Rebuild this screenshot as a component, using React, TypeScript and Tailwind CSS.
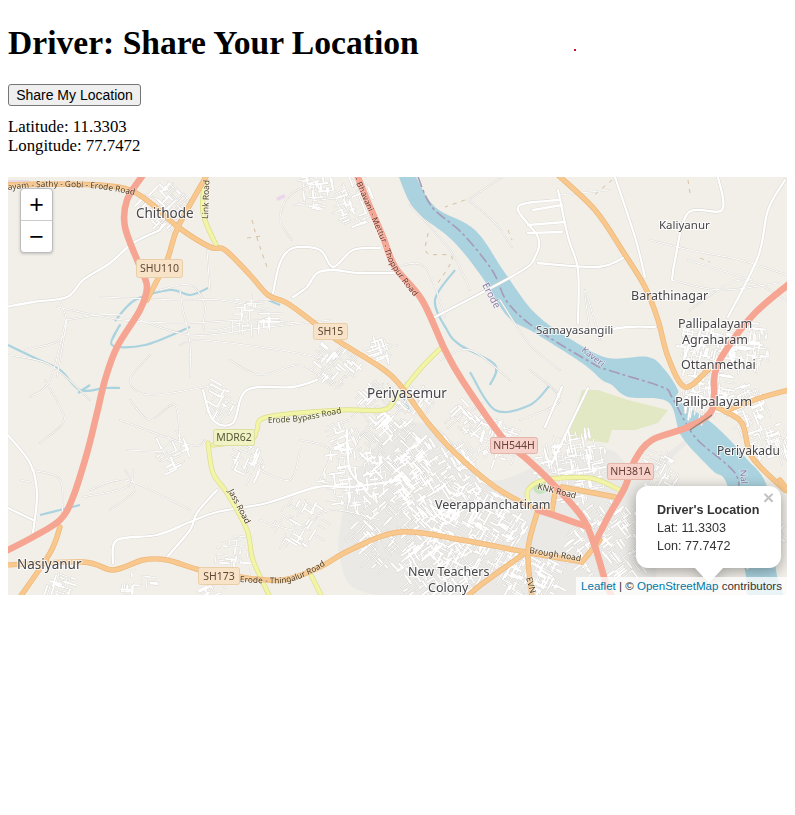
import { useMemo } from "react";

type Pt = [number, number];

const BG = "#f2efe9";

const motorways: Pt[][] = [
  [[143, 175], [127, 200], [125, 227], [140, 267], [147, 287], [140, 310], [117, 347], [105, 380], [97, 413], [87, 453], [73, 497], [60, 520], [33, 537], [6, 551]],
  [[357, 175], [367, 200], [383, 237], [395, 267], [422, 300], [445, 350], [462, 380], [502, 437], [528, 460], [552, 483], [582, 517], [595, 547], [605, 580], [612, 597]],
  [[789, 284], [755, 313], [728, 347], [715, 373], [712, 410], [688, 427], [652, 440], [635, 460], [625, 487], [608, 517], [595, 543]],
  [[538, 510], [562, 518], [588, 527]],
];

const primaries: Pt[][] = [
  [[6, 185], [50, 184], [100, 185], [130, 190], [153, 205], [178, 227], [210, 247], [225, 250], [250, 275], [268, 295], [287, 303], [313, 322], [340, 342], [380, 367], [400, 385], [428, 423], [455, 453], [495, 487], [528, 505], [552, 512]],
  [[207, 175], [178, 227], [167, 260], [147, 300]],
  [[6, 565], [83, 562], [113, 570], [143, 560], [167, 560], [200, 570], [240, 577], [283, 580], [320, 567], [350, 550], [400, 532], [462, 540], [525, 552], [582, 562]],
  [[60, 527], [50, 553], [20, 597]],
  [[525, 553], [478, 587], [468, 597]],
  [[538, 510], [528, 550], [532, 597]],
  [[562, 487], [615, 497]],
  [[555, 493], [552, 510]],
  [[582, 562], [600, 540]],
  [[558, 175], [595, 210], [622, 250], [645, 287], [658, 320], [668, 357], [685, 387], [708, 370]],
  [[712, 405], [722, 410], [742, 423], [752, 457], [785, 490]],
  [[728, 410], [760, 398], [789, 390]],
  [[780, 480], [789, 492]],
];

const secondaries: Pt[][] = [
  [[205, 177], [203, 213], [217, 247]],
  [[208, 443], [213, 473], [227, 493], [247, 530], [253, 560], [270, 597]],
  [[213, 445], [250, 440], [257, 430], [267, 417], [340, 410], [383, 410], [397, 397], [422, 367], [442, 347]],
  [[310, 573], [322, 597]],
  [[529, 505], [528, 490], [545, 480], [590, 478], [620, 490]],
];

const whiteRoads: Pt[][] = [
  [[6, 307], [33, 302], [67, 297], [83, 280], [110, 263], [133, 243], [160, 230]],
  [[273, 293], [280, 263], [293, 248], [320, 250], [333, 267], [353, 250], [380, 248]],
  [[293, 297], [307, 287], [317, 273], [333, 270], [360, 273], [397, 273]],
  [[6, 433], [30, 463], [37, 493], [33, 533]],
  [[113, 563], [117, 540], [157, 535], [190, 522], [217, 512], [267, 503], [317, 487], [350, 487], [400, 480]],
  [[167, 557], [190, 530], [197, 513], [217, 490]],
  [[203, 390], [213, 420], [233, 423], [247, 390], [293, 387], [317, 380]],
  [[6, 507], [33, 520]],
  [[435, 317], [518, 273], [535, 257], [538, 237], [518, 207], [558, 200]],
  [[558, 190], [568, 237], [578, 270], [578, 323]],
  [[528, 233], [562, 232]],
  [[615, 177], [635, 237], [645, 277]],
  [[718, 177], [722, 210], [688, 213], [675, 260], [672, 280]],
  [[785, 180], [768, 210], [758, 257], [728, 317]],
  [[538, 263], [598, 267], [625, 257]],
  [[588, 333], [628, 327], [655, 327]],
  [[588, 388], [552, 463]],
  [[562, 387], [545, 427]],
  [[533, 210], [562, 205]],
  [[528, 225], [565, 222]],
  [[347, 430], [350, 470], [367, 490]],
];

const minorRoads: Pt[][] = [
  [[25, 350], [60, 340], [66, 320], [60, 300]],
  [[100, 297], [180, 300], [220, 300], [270, 310]],
  [[66, 320], [120, 315], [190, 335], [260, 328], [330, 320]],
  [[66, 320], [50, 380], [30, 397]],
  [[8, 355], [50, 365], [90, 400]],
  [[120, 420], [190, 445], [205, 440]],
  [[30, 470], [60, 480], [62, 520]],
  [[125, 470], [135, 490], [110, 510]],
  [[90, 490], [125, 480], [170, 500], [190, 510]],
  [[410, 205], [450, 250], [470, 290]],
  [[530, 370], [560, 400], [520, 420]],
  [[590, 330], [585, 290], [600, 340]],
  [[650, 240], [690, 250], [740, 260], [787, 275]],
  [[610, 190], [560, 195]],
  [[690, 310], [740, 280], [787, 300]],
  [[320, 180], [290, 195], [280, 220], [292, 240]],
  [[160, 290], [190, 285], [205, 305], [205, 330], [240, 325]],
  [[180, 345], [200, 340], [280, 350], [330, 360]],
  [[260, 520], [300, 530], [330, 510], [380, 520]],
  [[130, 400], [150, 420], [175, 405], [180, 450]],
  [[45, 380], [60, 407], [63, 423], [40, 443]],
  [[20, 480], [37, 483]],
  [[127, 450], [167, 452]],
  [[83, 497], [127, 487], [133, 470]],
  [[57, 307], [123, 320], [187, 323], [247, 320], [300, 323]],
  [[67, 320], [57, 377]],
  [[210, 290], [207, 250]],
  [[180, 290], [183, 310], [190, 343], [190, 377]],
  [[468, 200], [495, 223], [512, 247]],
  [[468, 200], [502, 177]],
  [[672, 280], [720, 290], [778, 283]],
  [[688, 260], [752, 280]],
  [[395, 267], [425, 267], [445, 317]],
  [[500, 300], [530, 345], [560, 370]],
  [[440, 360], [470, 350], [510, 380]],
  [[300, 440], [330, 450], [320, 480]],
  [[260, 470], [290, 480], [300, 450]],
  [[150, 355], [130, 380], [150, 395], [215, 385]],
  [[230, 360], [260, 375], [300, 365], [330, 385]],
];

// farm tracks, drawn dashed
const tracks: Pt[][] = [
  [[252, 220], [257, 238], [267, 267]],
  [[247, 238], [262, 236]],
  [[428, 233], [427, 253], [452, 257], [438, 283]],
  [[465, 200], [445, 207]],
  [[612, 180], [592, 197]],
  [[688, 180], [690, 193]],
  [[508, 230], [512, 240]],
  [[700, 258], [710, 262]],
];

const riverLines: Pt[][] = [
  [[115, 321], [135, 300], [170, 290], [190, 295], [208, 288]],
  [[112, 340], [120, 325], [112, 345], [145, 345], [190, 327]],
  [[8, 345], [35, 358], [60, 370], [80, 390], [105, 388], [120, 388]],
  [[78, 393], [90, 385]],
  [[40, 515], [60, 510], [80, 505]],
  [[268, 300], [280, 305]],
  [[400, 390], [410, 412]],
  [[455, 270], [435, 300], [447, 330], [460, 345], [495, 365], [490, 385]],
  [[470, 372], [495, 410], [530, 405], [550, 385]],
];

// main river, upper bank then back along the lower bank
const river: Pt[] = [
  [415, 175], [435, 207], [475, 230], [505, 273], [535, 313], [572, 340], [608, 358], [648, 357], [665, 370], [678, 390], [678, 400], [712, 423], [745, 457], [768, 490], [776, 570], [782, 597],
  [750, 597], [745, 570], [728, 487], [712, 470], [682, 437], [668, 402], [628, 397], [612, 385], [602, 380], [582, 363], [535, 333], [508, 317], [482, 277], [452, 240], [415, 210], [398, 175],
];

const boundary: Pt[] = [[418, 177], [432, 207], [462, 233], [492, 270], [508, 303], [538, 330], [592, 363], [608, 370], [662, 387], [672, 397], [695, 437], [735, 473], [738, 500]];

const park: Pt[] = [[582, 390], [598, 390], [628, 400], [668, 410], [658, 423], [635, 430], [612, 430], [608, 443], [582, 440], [568, 437]];

const builtUp: Pt[] = [[395, 420], [440, 430], [490, 480], [560, 455], [610, 450], [640, 470], [700, 430], [640, 500], [640, 597], [390, 597], [340, 560], [350, 480]];

// x, y, radius, number of streets
const clusters: [number, number, number, number][] = [
  [165, 205, 24, 70], [318, 192, 18, 50], [358, 205, 20, 55], [250, 313, 20, 45], [340, 365, 22, 60], [385, 350, 14, 28], [378, 402, 22, 60], [418, 400, 18, 36],
  [355, 475, 32, 100], [395, 450, 36, 150], [440, 480, 44, 270], [395, 530, 42, 180], [480, 530, 48, 340], [440, 570, 40, 190], [530, 575, 30, 150], [575, 470, 36, 180], [610, 540, 40, 200],
  [500, 440, 22, 70], [470, 415, 18, 45], [700, 345, 24, 110], [745, 345, 26, 110], [705, 390, 24, 110], [745, 405, 22, 80], [770, 440, 20, 60], [660, 470, 20, 50], [250, 460, 16, 32],
  [175, 455, 16, 30], [225, 400, 16, 32], [345, 432, 14, 30], [300, 520, 24, 45], [235, 555, 20, 30], [60, 585, 14, 24], [135, 585, 16, 22], [215, 585, 12, 16], [755, 530, 30, 80],
];

const shields = [
  { x: 136, y: 259, w: 47, h: 19, label: "SHU110", fill: "#f8e3c9", line: "#e9cfa8", text: "#5d4a34" },
  { x: 313, y: 323, w: 35, h: 17, label: "SH15", fill: "#f8e3c9", line: "#e9cfa8", text: "#5d4a34" },
  { x: 213, y: 429, w: 42, h: 17, label: "MDR62", fill: "#f1f3c4", line: "#dcdf9f", text: "#55573a" },
  { x: 198, y: 567, w: 42, h: 18, label: "SH173", fill: "#f8e3c9", line: "#e9cfa8", text: "#5d4a34" },
  { x: 490, y: 437, w: 48, h: 17, label: "NH544H", fill: "#f6d2ca", line: "#e3b5ab", text: "#6a4039" },
  { x: 607, y: 463, w: 47, h: 17, label: "NH381A", fill: "#f6d2ca", line: "#e3b5ab", text: "#6a4039" },
];

const places: { x: number; y: number; label: string; size?: number }[] = [
  { x: 136, y: 218, label: "Chithode", size: 13.5 },
  { x: 659, y: 229, label: "Kaliyanur", size: 11.5 },
  { x: 631, y: 300, label: "Barathinagar", size: 12.5 },
  { x: 678, y: 328, label: "Pallipalayam", size: 12.5 },
  { x: 682, y: 344, label: "Agraharam", size: 12.5 },
  { x: 681, y: 369, label: "Ottanmethai", size: 12.5 },
  { x: 536, y: 334, label: "Samayasangili", size: 11.5 },
  { x: 675, y: 406, label: "Pallipalayam", size: 13 },
  { x: 367, y: 398, label: "Periyasemur", size: 13.5 },
  { x: 717, y: 455, label: "Periyakadu", size: 12 },
  { x: 435, y: 509, label: "Veerappanchatiram", size: 12.5 },
  { x: 408, y: 576, label: "New Teachers", size: 12.5 },
  { x: 428, y: 592, label: "Colony", size: 12.5 },
  { x: 17, y: 569, label: "Nasiyanur", size: 13.5 },
];

const roadLabels: { x: number; y: number; r: number; label: string; fill?: string; size?: number }[] = [
  { x: 208, y: 219, r: -88, label: "Link Road" },
  { x: 228, y: 491, r: 62, label: "Jass Road" },
  { x: 537, y: 489, r: 14, label: "KNK Road" },
  { x: 529, y: 553, r: 9, label: "Brough Road" },
  { x: 526, y: 578, r: 74, label: "EVN" },
  { x: 482, y: 285, r: 62, label: "Erode", fill: "#8d7ba6", size: 10 },
  { x: 581, y: 351, r: 38, label: "Kaveri", fill: "#8d7ba6", size: 9 },
  { x: 740, y: 470, r: 85, label: "Nal", fill: "#8d7ba6", size: 9 },
];

// long names that bend with their road
const curvedLabels: { id: string; points: Pt[]; label: string; fill: string }[] = [
  { id: "sathy", points: [[8, 190], [40, 187], [70, 187], [100, 189], [135, 195]], label: "ayam - Sathy - Gobi - Erode Road", fill: "#4d3d22" },
  { id: "bhavani", points: [[354, 179], [364, 201], [380, 238], [392, 267], [422, 307]], label: "- Bhavani - Mettur - Thoppur Road", fill: "#6a3427" },
  { id: "bypass", points: [[268, 423], [300, 421], [342, 413]], label: "Erode Bypass Road", fill: "#4d4d22" },
  { id: "thingalur", points: [[240, 582], [283, 583], [310, 574], [330, 562]], label: "Erode - Thingalur Road", fill: "#4d3d22" },
];

function smooth(points: Pt[]) {
  let d = `M${points[0][0]} ${points[0][1]}`;
  for (let i = 0; i < points.length - 1; i++) {
    const p0 = points[i - 1] ?? points[i];
    const p1 = points[i];
    const p2 = points[i + 1];
    const p3 = points[i + 2] ?? p2;
    const c1x = p1[0] + (p2[0] - p0[0]) / 6;
    const c1y = p1[1] + (p2[1] - p0[1]) / 6;
    const c2x = p2[0] - (p3[0] - p1[0]) / 6;
    const c2y = p2[1] - (p3[1] - p1[1]) / 6;
    d += `C${c1x.toFixed(1)} ${c1y.toFixed(1)} ${c2x.toFixed(1)} ${c2y.toFixed(1)} ${p2[0]} ${p2[1]}`;
  }
  return d;
}

function poly(points: Pt[]) {
  return `M${points.map((p) => p.join(" ")).join("L")}Z`;
}

// little street grids for the built-up bits, seeded so every render is the same
function streets() {
  let seed = 42;
  const rnd = () => {
    seed = (seed * 1664525 + 1013904223) % 4294967296;
    return seed / 4294967296;
  };
  let thick = "";
  let thin = "";
  clusters.forEach(([cx, cy, r, n]) => {
    const base = rnd() * Math.PI;
    for (let i = 0; i < n; i++) {
      const a = rnd() * Math.PI * 2;
      const dist = Math.sqrt(rnd()) * r;
      const x = cx + Math.cos(a) * dist;
      const y = cy + Math.sin(a) * dist;
      const dir = base + (rnd() > 0.5 ? Math.PI / 2 : 0);
      const len = 3 + rnd() * 10;
      const seg = `M${x.toFixed(1)} ${y.toFixed(1)}l${(Math.cos(dir) * len).toFixed(1)} ${(Math.sin(dir) * len).toFixed(1)}`;
      if (i % 3 === 0) thick += seg;
      else thin += seg;
    }
  });
  return { thick, thin };
}

function MapDrawing() {
  const grid = useMemo(streets, []);

  return (
    <svg
      viewBox="8 177 779 418"
      className="absolute inset-0 block h-full w-full blur-[0.35px]"
      fontFamily="'Noto Sans', sans-serif"
    >
      <defs>
        {curvedLabels.map((l) => (
          <path key={l.id} id={l.id} d={smooth(l.points)} />
        ))}
      </defs>
      <rect x="8" y="177" width="779" height="418" fill={BG} />
      <path d={smooth(builtUp)} fill="#ebe9e5" />
      <path d={poly(park)} fill="#e3e8c4" />
      <circle cx="540" cy="487" r="7" fill="#c5e3bd" />
      <path d="M8 186h30l-10 -6h-20Z" fill="#e7dbe8" />
      <path d="M276 198l8 -4l2 3l-8 4Z" fill="#ecd6ec" />

      <path d={smooth(river)} fill="#aad3df" />
      {riverLines.map((line, i) => (
        <path key={i} d={smooth(line)} fill="none" stroke="#aad3df" strokeWidth="2.2" strokeLinejoin="round" />
      ))}
      <path d={smooth(boundary)} fill="none" stroke="#a79ab8" strokeWidth="1.6" strokeDasharray="11 3 3 3" />
      {tracks.map((line, i) => (
        <path key={i} d={smooth(line)} fill="none" stroke="#d3bf9c" strokeWidth="1" strokeDasharray="4 5" />
      ))}

      {/* grey casing first, white streets on top */}
      <g fill="none" strokeLinecap="round" strokeLinejoin="round" stroke="#d7d4cf">
        <path d={grid.thin} strokeWidth="1.7" />
        <path d={grid.thick} strokeWidth="2.6" />
        {minorRoads.map((line, i) => (
          <path key={i} d={smooth(line)} strokeWidth="1.7" />
        ))}
        {whiteRoads.map((line, i) => (
          <path key={i} d={smooth(line)} strokeWidth="3.2" />
        ))}
      </g>
      <g fill="none" strokeLinecap="round" strokeLinejoin="round" stroke="#ffffff">
        <path d={grid.thin} strokeWidth="1" />
        <path d={grid.thick} strokeWidth="1.8" />
        {minorRoads.map((line, i) => (
          <path key={i} d={smooth(line)} strokeWidth="1" />
        ))}
        {whiteRoads.map((line, i) => (
          <path key={i} d={smooth(line)} strokeWidth="2.3" />
        ))}
      </g>

      <g fill="none" strokeLinecap="round" strokeLinejoin="round">
        {secondaries.map((line, i) => (
          <path key={i} d={smooth(line)} stroke="#dcdd8e" strokeWidth="5" />
        ))}
        {secondaries.map((line, i) => (
          <path key={i} d={smooth(line)} stroke="#f3f5a6" strokeWidth="3.6" />
        ))}
        {primaries.map((line, i) => (
          <path key={i} d={smooth(line)} stroke="#eeb878" strokeWidth="5.4" />
        ))}
        {primaries.map((line, i) => (
          <path key={i} d={smooth(line)} stroke="#f8c88e" strokeWidth="4" />
        ))}
        {motorways.map((line, i) => (
          <path key={i} d={smooth(line)} stroke="#f5a592" strokeWidth="6.6" />
        ))}
      </g>

      <path d="M690 430l22 -15" stroke="#6d6d5c" strokeWidth="1.2" opacity="0.7" />

      {curvedLabels.map((l) => (
        <text key={l.id} fontSize="8.3" fill={l.fill} stroke="#ffffff" strokeOpacity="0.35" strokeWidth="1.2" paintOrder="stroke">
          <textPath href={`#${l.id}`}>{l.label}</textPath>
        </text>
      ))}

      {roadLabels.map((l) => (
        <text
          key={l.label}
          transform={`translate(${l.x} ${l.y}) rotate(${l.r})`}
          fontSize={l.size ?? 8.5}
          fill={l.fill ?? "#4d3d22"}
          stroke="#ffffff"
          strokeOpacity="0.45"
          strokeWidth="1.5"
          paintOrder="stroke"
        >
          {l.label}
        </text>
      ))}

      {places.map((p) => (
        <text
          key={`${p.label}${p.x}`}
          x={p.x}
          y={p.y}
          fontSize={p.size ?? 13}
          fill="#46464a"
          stroke="#ffffff"
          strokeOpacity="0.75"
          strokeWidth="2"
          paintOrder="stroke"
        >
          {p.label}
        </text>
      ))}

      {shields.map((s) => (
        <g key={s.label}>
          <rect x={s.x + 0.5} y={s.y + 0.5} width={s.w - 1} height={s.h - 1} rx="2" fill={s.fill} stroke={s.line} />
          <text x={s.x + s.w / 2} y={s.y + s.h / 2 + 3.8} fontSize="10.5" textAnchor="middle" fill={s.text}>
            {s.label}
          </text>
        </g>
      ))}
    </svg>
  );
}

function ZoomControls() {
  return (
    <div className="absolute left-[12px] top-[11px] w-[33px] rounded-[4px] border border-[#bdbdbd] bg-white font-['Liberation_Sans',sans-serif] text-black shadow-[0_1px_3px_rgba(0,0,0,0.2)]">
      <div className="flex h-[32px] items-center justify-center rounded-t-[4px] border-b border-[#ccc] text-[25px] leading-none">+</div>
      <div className="flex h-[31px] items-center justify-center rounded-b-[4px] text-[25px] leading-none">−</div>
    </div>
  );
}

function Popup() {
  return (
    <div className="absolute left-[628px] top-[309px] drop-shadow-[0_3px_7px_rgba(0,0,0,0.35)]">
      <div className="relative h-[82px] w-[145px] rounded-[12px] bg-white pl-[21px] pt-[15px] font-['Liberation_Sans',sans-serif] text-[12.6px] leading-[18px] text-[#333]">
        <b className="block">Driver's Location</b>
        <div>Lat: 11.3303</div>
        <div>Lon: 77.7472</div>
        <span className="absolute right-[7px] top-[4px] text-[19px] font-bold leading-[16px] text-[#c3c3c3]">×</span>
      </div>
      <div className="mx-auto h-0 w-0 border-x-[14px] border-t-[15px] border-x-transparent border-t-white" />
    </div>
  );
}

export default function App() {
  return (
    <div className="min-h-[815px] bg-white px-2 font-['Liberation_Serif',serif] text-black">
      <h1 className="pt-[24px] text-[33.6px] font-bold leading-[37px]">Driver: Share Your Location</h1>
      <button className="mt-[23px] block h-[22px] w-[133px] rounded-[3px] border border-[#767676] bg-[#efefef] font-['Liberation_Sans',sans-serif] text-[14px] leading-none">
        Share My Location
      </button>
      <div className="mt-[11px] text-[16.8px] leading-[19px]">
        <p>Latitude: 11.3303</p>
        <p>Longitude: 77.7472</p>
      </div>
      <div className="relative mt-[22px] h-[418px] w-[779px] overflow-hidden">
        <MapDrawing />
        <ZoomControls />
        <Popup />
        <div className="absolute bottom-0 right-0 bg-white/75 px-[5px] font-['Liberation_Sans',sans-serif] text-[11.55px] leading-[18px] text-[#333]">
          <span className="text-[#0078a8]">Leaflet</span> | © <span className="text-[#0078a8]">OpenStreetMap</span> contributors
        </div>
      </div>
      <div className="absolute left-[574px] top-[49px] h-[2px] w-[2px] bg-[#c8102e]" />
    </div>
  );
}
